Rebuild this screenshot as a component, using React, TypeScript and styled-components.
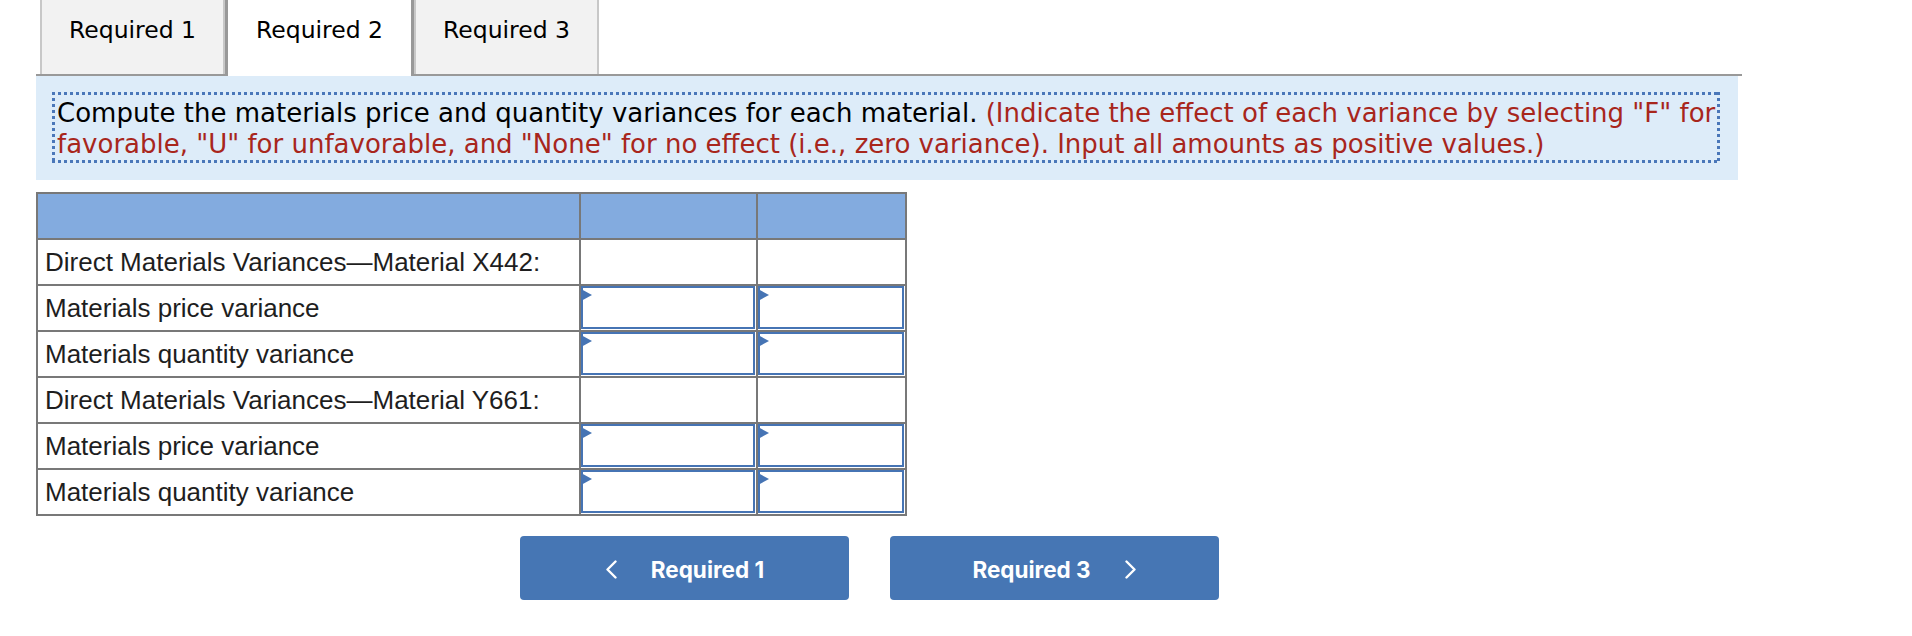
import styled, { createGlobalStyle } from 'styled-components'

const GlobalStyle = createGlobalStyle`
  body {
    margin: 0;
    background: #fff;
  }
`;

const Page = styled.div`
  padding-left: 36px;
`;

const TabBar = styled.div`
  display: flex;
  align-items: flex-start;
  width: 1702px;
  height: 74px;
  padding-left: 4px;
  border-bottom: 2px solid #999;
`;

const Tab = styled.div<{ $active?: boolean }>`
  box-sizing: border-box;
  height: ${p => (p.$active ? '76px' : '74px')};
  padding: 16px ${p => (p.$active ? '28px' : '27px')} 0;
  background: ${p => (p.$active ? '#fff' : '#f2f2f2')};
  border-left: ${p => (p.$active ? '3px solid #999' : '2px solid #c8c8c8')};
  border-right: ${p => (p.$active ? '3px solid #999' : '2px solid #c8c8c8')};
  font: 23.5px/28px "DejaVu Sans", Verdana, sans-serif;
  color: #000;
  white-space: nowrap;
`;

const Panel = styled.div`
  box-sizing: border-box;
  width: 1702px;
  background: #ddecf9;
  padding: 16px 18px 17px 16px;
`;

// square dots, like the reference's focus frame
const dots = '#4a77b9';
const Prompt = styled.p`
  margin: 0;
  padding: 6px 5px 3px;
  background:
    linear-gradient(to right, ${dots} 50%, transparent 0) top left / 6px 3px repeat-x,
    linear-gradient(to right, ${dots} 50%, transparent 0) bottom left / 6px 3px repeat-x,
    linear-gradient(to bottom, ${dots} 50%, transparent 0) top left / 3px 6px repeat-y,
    linear-gradient(to bottom, ${dots} 50%, transparent 0) top right / 3px 6px repeat-y;
  font: 26px/31px "DejaVu Sans", Verdana, sans-serif;
  color: #000;
  white-space: nowrap;
`;

const Note = styled.span`
  color: #a8261c;
`;

const Grid = styled.div`
  display: grid;
  grid-template-columns: 541px 175px 147px;
  grid-auto-rows: 44px;
  gap: 2px;
  padding: 2px;
  width: fit-content;
  margin-top: 12px;
  background: #787878;
  font: 26px "Liberation Sans", Arial, sans-serif;
  color: #1e1e1e;
`;

const Cell = styled.div<{ $head?: boolean }>`
  display: flex;
  align-items: center;
  padding: 1px 7px 0;
  background: ${p => (p.$head ? '#83abdf' : '#fff')};
  white-space: nowrap;
`;

const InputCell = styled.div`
  display: flex;
  min-width: 0;
  padding: 0 1px 1px 0;
  background: #fff;
`;

const Field = styled.div`
  position: relative;
  flex: 1;
  min-width: 0;
  display: flex;
  border: 2px solid #4674b4;

  &::before {
    content: "";
    position: absolute;
    left: -2px;
    top: 1px;
    border-left: 11px solid #4674b4;
    border-top: 6.5px solid transparent;
    border-bottom: 6.5px solid transparent;
  }

  input {
    flex: 1;
    width: 0;
    min-width: 0;
    padding: 0;
    border: 0;
    outline: 0;
    background: transparent;
  }
`;

const NavRow = styled.div`
  display: flex;
  gap: 41px;
  padding-left: 484px;
  margin-top: 20px;
`;

const NavButton = styled.button`
  display: flex;
  align-items: center;
  justify-content: center;
  gap: 34px;
  width: 329px;
  height: 64px;
  padding: 2px 0 0;
  border: 0;
  border-radius: 4px;
  background: #4676b4;
  color: #fff;
  font: 700 22.5px Inter, "Noto Sans", sans-serif;
  cursor: pointer;
`;

const Chevron = ({ dir }: { dir: 'left' | 'right' }) => (
  <svg width="12" height="19" viewBox="0 0 12 19" fill="none">
    <polyline
      points={dir === 'left' ? '10.5,1.5 2.5,9.5 10.5,17.5' : '1.5,1.5 9.5,9.5 1.5,17.5'}
      stroke="#fff"
      strokeWidth="2.4"
      strokeLinecap="round"
      strokeLinejoin="round"
    />
  </svg>
);

const rows = [
  { label: 'Direct Materials Variances\u2014Material X442:', input: false },
  { label: 'Materials price variance', input: true },
  { label: 'Materials quantity variance', input: true },
  { label: 'Direct Materials Variances\u2014Material Y661:', input: false },
  { label: 'Materials price variance', input: true },
  { label: 'Materials quantity variance', input: true },
];

const Entry = () => (
  <InputCell>
    <Field>
      <input type="text" />
    </Field>
  </InputCell>
);

export default function App() {
  return (
    <>
      <GlobalStyle />
      <Page>
        <TabBar>
          <Tab>Required 1</Tab>
          <Tab $active>Required 2</Tab>
          <Tab>Required 3</Tab>
        </TabBar>
        <Panel>
          <Prompt>
            Compute the materials price and quantity variances for each material.{' '}
            <Note>
              (Indicate the effect of each variance by selecting "F" for
              <br />
              favorable, "U" for unfavorable, and "None" for no effect (i.e., zero variance). Input all amounts as positive values.)
            </Note>
          </Prompt>
        </Panel>

        <Grid>
          <Cell $head />
          <Cell $head />
          <Cell $head />
          {rows.map((r, i) =>
            r.input
              ? [<Cell key={i}>{r.label}</Cell>, <Entry key={i + 'a'} />, <Entry key={i + 'b'} />]
              : [<Cell key={i}>{r.label}</Cell>, <Cell key={i + 'a'} />, <Cell key={i + 'b'} />]
          )}
        </Grid>

        <NavRow>
          <NavButton>
            <Chevron dir="left" />
            Required 1
          </NavButton>
          <NavButton>
            Required 3
            <Chevron dir="right" />
          </NavButton>
        </NavRow>
      </Page>
    </>
  );
}
